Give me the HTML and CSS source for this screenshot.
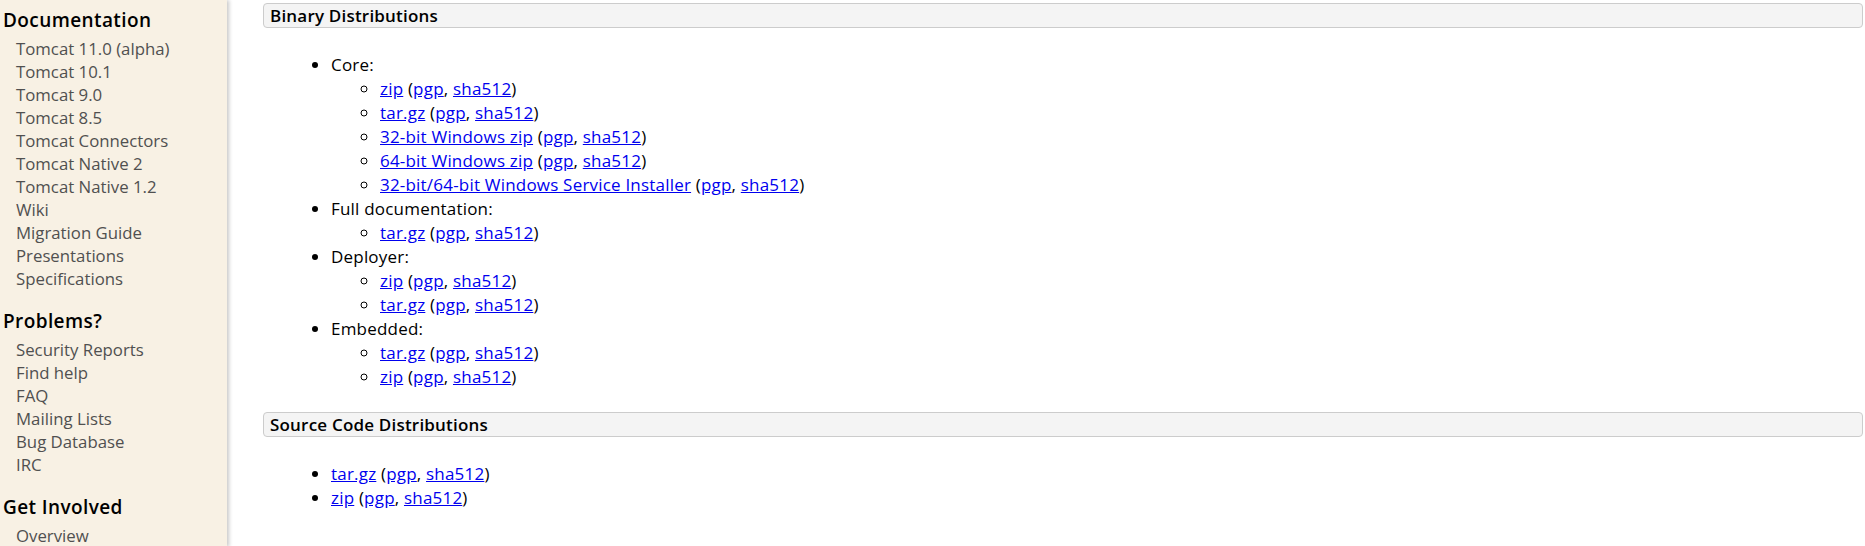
FILE: index.html
```html
<!DOCTYPE html>
<html lang="en">
<head>
<meta charset="utf-8">
<title>Apache Tomcat - Downloads</title>
<link rel="stylesheet" href="styles.css">
</head>
<body>
<div class="page">
  <nav class="sidebar">
    <div class="nav-section">
      <h2 class="nav-title">Documentation</h2>
      <ul class="nav-list">
        <li><a href="#">Tomcat 11.0 (alpha)</a></li>
        <li><a href="#">Tomcat 10.1</a></li>
        <li><a href="#">Tomcat 9.0</a></li>
        <li><a href="#">Tomcat 8.5</a></li>
        <li><a href="#">Tomcat Connectors</a></li>
        <li><a href="#">Tomcat Native 2</a></li>
        <li><a href="#">Tomcat Native 1.2</a></li>
        <li><a href="#">Wiki</a></li>
        <li><a href="#">Migration Guide</a></li>
        <li><a href="#">Presentations</a></li>
        <li><a href="#">Specifications</a></li>
      </ul>
    </div>
    <div class="nav-section">
      <h2 class="nav-title">Problems?</h2>
      <ul class="nav-list">
        <li><a href="#">Security Reports</a></li>
        <li><a href="#">Find help</a></li>
        <li><a href="#">FAQ</a></li>
        <li><a href="#">Mailing Lists</a></li>
        <li><a href="#">Bug Database</a></li>
        <li><a href="#">IRC</a></li>
      </ul>
    </div>
    <div class="nav-section">
      <h2 class="nav-title">Get Involved</h2>
      <ul class="nav-list">
        <li><a href="#">Overview</a></li>
      </ul>
    </div>
  </nav>
  <main class="content">
    <h3 class="section-head">Binary Distributions</h3>
    <ul class="dist-list">
      <li>Core:
        <ul class="sub-list">
          <li><a href="#">zip</a> (<a href="#">pgp</a>, <a href="#">sha512</a>)</li>
          <li><a href="#">tar.gz</a> (<a href="#">pgp</a>, <a href="#">sha512</a>)</li>
          <li><a href="#">32-bit Windows zip</a> (<a href="#">pgp</a>, <a href="#">sha512</a>)</li>
          <li><a href="#">64-bit Windows zip</a> (<a href="#">pgp</a>, <a href="#">sha512</a>)</li>
          <li><a href="#">32-bit/64-bit Windows Service Installer</a> (<a href="#">pgp</a>, <a href="#">sha512</a>)</li>
        </ul>
      </li>
      <li>Full documentation:
        <ul class="sub-list">
          <li><a href="#">tar.gz</a> (<a href="#">pgp</a>, <a href="#">sha512</a>)</li>
        </ul>
      </li>
      <li>Deployer:
        <ul class="sub-list">
          <li><a href="#">zip</a> (<a href="#">pgp</a>, <a href="#">sha512</a>)</li>
          <li><a href="#">tar.gz</a> (<a href="#">pgp</a>, <a href="#">sha512</a>)</li>
        </ul>
      </li>
      <li>Embedded:
        <ul class="sub-list">
          <li><a href="#">tar.gz</a> (<a href="#">pgp</a>, <a href="#">sha512</a>)</li>
          <li><a href="#">zip</a> (<a href="#">pgp</a>, <a href="#">sha512</a>)</li>
        </ul>
      </li>
    </ul>
    <h3 class="section-head">Source Code Distributions</h3>
    <ul class="dist-list">
      <li><a href="#">tar.gz</a> (<a href="#">pgp</a>, <a href="#">sha512</a>)</li>
      <li><a href="#">zip</a> (<a href="#">pgp</a>, <a href="#">sha512</a>)</li>
    </ul>
  </main>
</div>
</body>
</html>
```
FILE: styles.css
```css
html, body {
  margin: 0;
  padding: 0;
  height: 546px;
  overflow: hidden;
}

body {
  font-family: "Open Sans", "Liberation Sans", sans-serif;
  font-size: 16px;
  color: #000;
  background: #fff;
}

.page {
  display: flex;
  align-items: stretch;
  min-height: 546px;
}

.sidebar {
  flex: 0 0 227px;
  width: 227px;
  background: #f8f1e4;
  box-shadow: 2px 0 4px rgba(0, 0, 0, 0.22);
  position: relative;
  z-index: 1;
  padding-top: 8px;
}

.nav-section + .nav-section {
  margin-top: 19px;
}

.nav-title {
  margin: 0 0 5px 0;
  padding-left: 3px;
  font-size: 19px;
  line-height: 24px;
  font-weight: 600;
  letter-spacing: 0.4px;
  color: #000;
}

.nav-list {
  list-style: none;
  margin: 0;
  padding: 0 0 0 16px;
}

.nav-list li {
  font-size: 16.8px;
  line-height: 23px;
}

.nav-list a {
  color: #505050;
  text-decoration: none;
}

.content {
  flex: 1 1 auto;
  padding: 3px 2px 0 36px;
}

.section-head {
  margin: 0;
  padding: 0 6px;
  font-size: 17px;
  line-height: 23px;
  font-weight: 600;
  letter-spacing: 0.2px;
  color: #000;
  background: #f4f4f4;
  border: 1px solid #cccccc;
  border-radius: 4px;
}

.dist-list {
  margin: 25px 0 23px 0;
  padding-left: 68px;
  font-size: 17px;
  line-height: 24px;
  letter-spacing: 0.2px;
  list-style: disc;
}

.sub-list {
  margin: 0;
  padding-left: 49px;
  list-style: circle;
}

.content a {
  color: #0000ee;
  text-decoration: underline;
}
```
